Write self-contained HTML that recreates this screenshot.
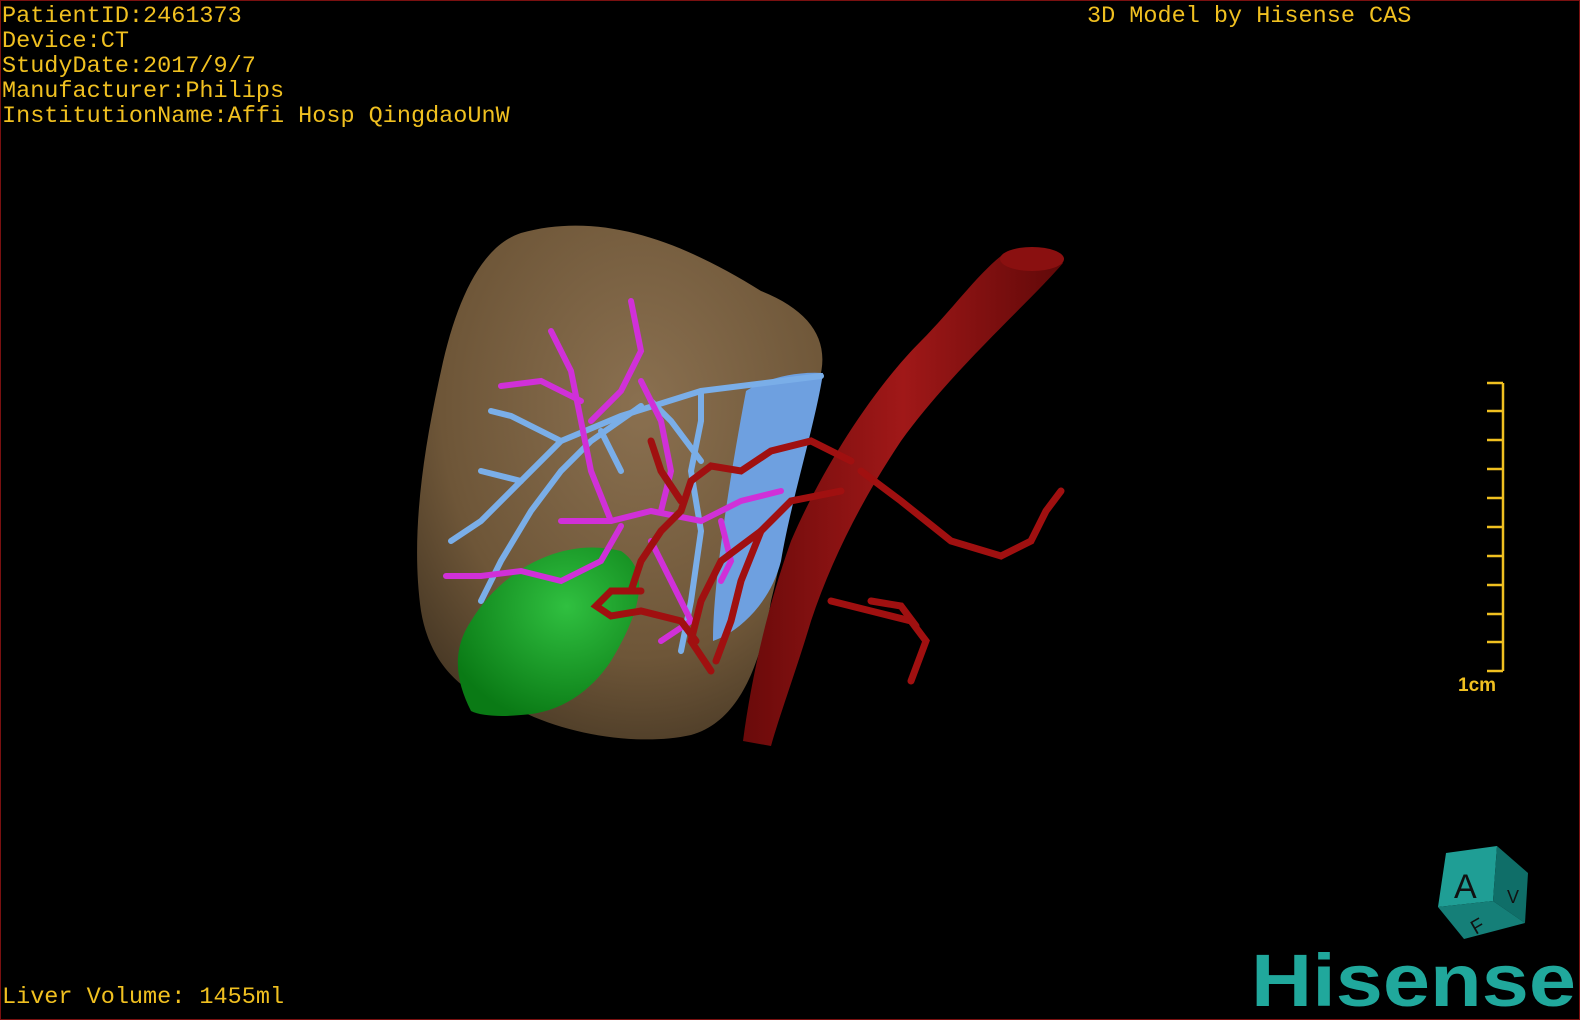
<!DOCTYPE html>
<html><head><meta charset="utf-8"><style>
html,body{margin:0;padding:0;background:#000;}
#s{position:relative;width:1580px;height:1020px;background:#000;overflow:hidden;box-sizing:border-box;border:1px solid #7a1010;}
.t{position:absolute;color:#f0c020;font-family:"Liberation Mono",monospace;font-size:23.5px;line-height:25px;white-space:pre;}
</style></head><body><div id="s">
<div class="t" style="left:1px;top:3px">PatientID:2461373
Device:CT
StudyDate:2017/9/7
Manufacturer:Philips
InstitutionName:Affi Hosp QingdaoUnW</div>
<div class="t" style="left:1086px;top:3px">3D Model by Hisense CAS</div>
<div class="t" style="left:1px;top:984px">Liver Volume: 1455ml</div>
<svg width="1580" height="1020" style="position:absolute;left:0;top:0">
<defs>
<radialGradient id="lv" cx="0.55" cy="0.35" r="0.7"><stop offset="0" stop-color="#8a7050"/><stop offset="0.7" stop-color="#6e5638"/><stop offset="1" stop-color="#4a3a26"/></radialGradient>
<radialGradient id="gb" cx="0.6" cy="0.35" r="0.7"><stop offset="0" stop-color="#30c040"/><stop offset="1" stop-color="#0a7a15"/></radialGradient>
<linearGradient id="ao" x1="0" x2="1"><stop offset="0" stop-color="#6a0a0a"/><stop offset="0.5" stop-color="#a01818"/><stop offset="1" stop-color="#600808"/></linearGradient>
</defs>
<path d="M520 232 C600 210 680 240 760 290 C810 310 830 340 818 380 C800 430 790 520 770 600 C760 660 740 720 690 734 C640 745 570 735 520 710 C470 700 430 670 420 610 C410 540 420 460 440 370 C455 300 480 245 520 232Z" fill="url(#lv)"/>
<path d="M470 710 C455 680 450 650 470 620 C500 570 560 535 620 550 C650 570 640 610 610 660 C590 690 560 712 520 714 C500 716 480 715 470 710Z" fill="url(#gb)"/>
<path d="M745 390 C760 380 790 370 822 372 C815 420 790 500 780 560 C770 600 740 630 712 640 C712 580 730 470 745 390Z" fill="#6ea0e0"/>
<path d="M1000 255 C1020 248 1045 250 1062 262 C1030 300 950 370 900 440 C860 500 830 560 810 620 C795 670 780 710 770 745 L742 740 C750 680 765 610 790 540 C820 470 870 390 920 340 C950 310 975 275 1000 255Z" fill="url(#ao)"/>
<ellipse cx="1031" cy="258" rx="32" ry="12" fill="#8a1010"/>
<g fill="none" stroke="#7aaee8" stroke-width="6" stroke-linecap="round">
<path d="M820 375 L700 390 L620 415 L560 440 L520 480 L480 520 L450 540"/>
<path d="M640 405 L590 440 L560 470 L530 510 L500 560 L480 600"/>
<path d="M560 440 L510 415 L490 410"/><path d="M520 480 L480 470"/>
<path d="M700 390 L700 420 L690 470 L700 530 L690 600 L680 650"/>
<path d="M600 430 L620 470"/><path d="M650 400 L670 420 L700 460"/>
</g>
<g fill="none" stroke="#d030d8" stroke-width="6" stroke-linecap="round">
<path d="M560 520 L610 520 L650 510 L700 520 L740 500 L780 490"/>
<path d="M610 520 L590 470 L580 420 L570 370 L550 330"/>
<path d="M590 420 L620 390 L640 350 L630 300"/><path d="M580 400 L540 380 L500 385"/>
<path d="M640 380 L660 420 L670 470 L660 510"/>
<path d="M620 525 L600 560 L560 580 L520 570 L480 575 L445 575"/>
<path d="M650 540 L670 580 L690 620 L660 640"/>
<path d="M720 520 L730 560 L720 580"/>
</g>
<g fill="none" stroke="#a01010" stroke-width="7" stroke-linecap="round">
<path d="M850 460 L810 440 L770 450 L740 470 L710 465 L690 480 L680 510 L660 530 L640 560 L630 590"/>
<path d="M840 490 L790 500 L760 530 L740 580 L730 620 L715 660"/>
<path d="M860 470 L900 500 L950 540 L1000 555 L1030 540 L1045 510 L1060 490"/>
<path d="M830 600 L870 610 L910 620 L925 640 L910 680"/>
<path d="M870 600 L900 605 L915 625"/>
<path d="M680 500 L660 470 L650 440"/><path d="M760 530 L720 560 L700 600 L690 640 L710 670"/>
<path d="M640 590 L610 590 L595 605 L610 615 L640 610 L680 620 L695 640"/>
</g>
<g stroke="#f0c020" stroke-width="2.5" fill="none">
<path d="M1502 382 V670"/>
<path d="M1486 382H1502M1486 410H1502M1486 439H1502M1486 468H1502M1486 497H1502M1486 526H1502M1486 555H1502M1486 584H1502M1486 613H1502M1486 641H1502M1486 670H1502"/>
</g>
<text x="1457" y="690" fill="#f0c020" font-family="Liberation Sans,sans-serif" font-size="19" font-weight="bold">1cm</text>
<polygon points="1445,852 1496,845 1492,900 1437,906" fill="#1f9e95"/>
<polygon points="1496,845 1527,872 1524,922 1492,900" fill="#0f6e68"/>
<polygon points="1437,906 1492,900 1524,922 1463,938" fill="#157f78"/>
<text x="1453" y="897" fill="#111" font-family="Liberation Sans,sans-serif" font-size="34">A</text>
<text x="1506" y="902" fill="#111" font-family="Liberation Sans,sans-serif" font-size="18">V</text>
<text x="1470" y="931" fill="#111" font-family="Liberation Sans,sans-serif" font-size="20" transform="rotate(-30 1478 924)">F</text>
<text x="1250" y="1005" fill="#20a89c" font-family="Liberation Sans,sans-serif" font-size="74" font-weight="bold" textLength="325" lengthAdjust="spacingAndGlyphs">Hisense</text>
</svg>
</div></body></html>
